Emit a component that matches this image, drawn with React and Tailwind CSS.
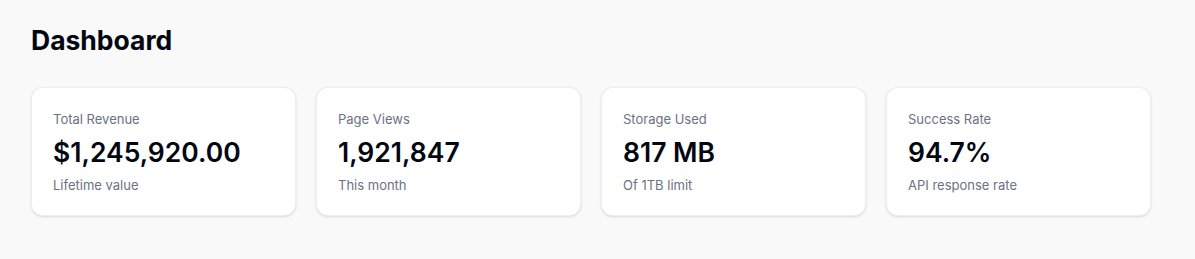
const stats = [
  { label: 'Total Revenue', value: '$1,245,920.00', note: 'Lifetime value' },
  { label: 'Page Views', value: '1,921,847', note: 'This month' },
  { label: 'Storage Used', value: '817 MB', note: 'Of 1TB limit' },
  { label: 'Success Rate', value: '94.7%', note: 'API response rate' },
];

const StatCard = ({ label, value, note }) => (
  <div className="bg-white rounded-xl border border-gray-200/70 shadow-sm px-[21px] pt-[21px] pb-5">
    <div className="text-[13px] leading-5 text-gray-500">{label}</div>
    <div className="mt-[7px] text-[26.5px] leading-8 font-semibold text-gray-950">{value}</div>
    <div className="mt-[7px] text-[13px] leading-5 text-gray-500">{note}</div>
  </div>
);

export default function App() {
  return (
    <div className="min-h-screen bg-[#f9f9f9] px-[31px] pt-6 font-['Inter',sans-serif]">
      <h1 className="text-[26.5px] leading-8 font-bold text-gray-950">Dashboard</h1>
      <div className="mt-[31px] grid grid-cols-4 gap-5 w-[1120px]">
        {stats.map((s) => (
          <StatCard key={s.label} {...s} />
        ))}
      </div>
    </div>
  );
}
